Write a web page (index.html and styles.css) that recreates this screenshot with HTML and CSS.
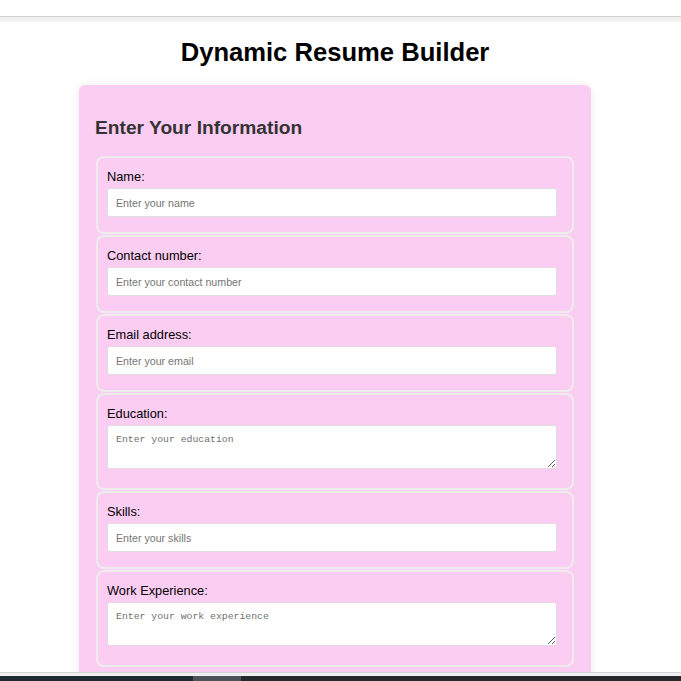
FILE: index.html
```html
<!DOCTYPE html>
<html lang="en">
<head>
<meta charset="utf-8">
<title>Dynamic Resume Builder</title>
<link rel="stylesheet" href="styles.css">
</head>
<body>
<div class="chrome-top">
  <div class="chrome-line"></div>
  <div class="chrome-band"></div>
</div>
<main class="page">
  <h1 class="title">Dynamic Resume Builder</h1>
  <section class="card">
    <h2 class="card-title">Enter Your Information</h2>
    <form class="form">
      <div class="group">
        <label class="label" for="name">Name:</label>
        <input class="field" id="name" type="text" placeholder="Enter your name">
      </div>
      <div class="group">
        <label class="label" for="contact">Contact number:</label>
        <input class="field" id="contact" type="text" placeholder="Enter your contact number">
      </div>
      <div class="group">
        <label class="label" for="email">Email address:</label>
        <input class="field" id="email" type="text" placeholder="Enter your email">
      </div>
      <div class="group group-tall">
        <label class="label" for="education">Education:</label>
        <textarea class="area" id="education" placeholder="Enter your education"></textarea>
      </div>
      <div class="group">
        <label class="label" for="skills">Skills:</label>
        <input class="field" id="skills" type="text" placeholder="Enter your skills">
      </div>
      <div class="group group-tall">
        <label class="label" for="work">Work Experience:</label>
        <textarea class="area" id="work" placeholder="Enter your work experience"></textarea>
      </div>
    </form>
  </section>
</main>
<div class="taskbar">
  <div class="task-line"></div>
  <div class="task-band"></div>
  <div class="task-dark">
    <div class="task-left"></div>
    <div class="task-active"></div>
    <div class="task-rest"></div>
  </div>
</div>
</body>
</html>
```

FILE: styles.css
```css
* { box-sizing: border-box; }

html, body {
  margin: 0;
  padding: 0;
  background: #ffffff;
}

body {
  height: 681px;
  overflow: hidden;
  display: flex;
  flex-direction: column;
  font-family: "Liberation Sans", Arial, sans-serif;
}

.chrome-top {
  flex: 0 0 22px;
  display: flex;
  flex-direction: column;
  justify-content: flex-end;
}
.chrome-line { height: 1px; background: #d2d2d2; }
.chrome-band { height: 5px; background: linear-gradient(#ececec, #f6f6f6); }

.page {
  flex: 1 1 auto;
  overflow: hidden;
  width: 670px;
  display: flex;
  flex-direction: column;
  align-items: center;
}

.title {
  margin: 16px 0 18px;
  font-size: 25.6px;
  line-height: 29px;
  font-weight: bold;
  color: #000;
  text-align: center;
}

.card {
  width: 512px;
  flex: 0 0 auto;
  background: #fccdf2;
  border-radius: 6px;
  padding: 16px 16px 16px;
  box-shadow: 0 0 8px rgba(0, 0, 0, 0.08);
}

.card-title {
  margin: 16px 0 17px;
  font-size: 19.2px;
  line-height: 22px;
  font-weight: bold;
  color: #333333;
}

.form {
  display: flex;
  flex-direction: column;
  gap: 1px;
}

.group {
  margin: 0 1px;
  height: 78px;
  border: 2px solid #ededed;
  border-radius: 8px;
  padding: 11px 9px 0;
  display: flex;
  flex-direction: column;
}
.group-tall { height: 97px; }

.label {
  display: block;
  font-size: 12.8px;
  line-height: 15px;
  color: #000;
  margin-bottom: 4px;
}

.field, .area {
  display: block;
  width: 450px;
  background: #ffffff;
  border: 1px solid #dedede;
  border-radius: 3px;
  color: #000;
}

.field {
  height: 29px;
  padding: 0 8px;
  font-family: "Liberation Sans", Arial, sans-serif;
  font-size: 10.67px;
}

.area {
  height: 44px;
  padding: 8px 8px;
  font-family: "Liberation Mono", "DejaVu Sans Mono", monospace;
  font-size: 9.8px;
  resize: vertical;
}

.field::placeholder { color: #757575; }
.area::placeholder { color: #6f6f6f; }

.taskbar {
  flex: 0 0 9px;
  display: flex;
  flex-direction: column;
}
.task-line { height: 1px; background: #d6d6d6; }
.task-band { height: 3px; background: #efefef; }
.task-dark { height: 5px; display: flex; }
.task-left { width: 193px; background: #1e2a31; }
.task-active { width: 48px; background: #4c5459; }
.task-rest { flex: 1; background: #26292c; }
```
